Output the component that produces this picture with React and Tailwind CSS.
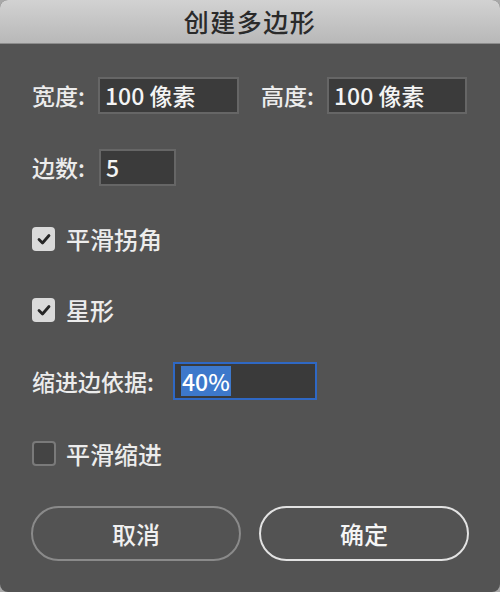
import React from "react";

const font = { fontFamily: '"Noto Sans CJK SC", "Noto Sans", sans-serif' };

function Check({ checked }) {
  return checked ? (
    <div className="w-[23px] h-[24px] rounded-[4px] bg-[#dadada] flex items-center justify-center">
      <svg width="14" height="12" viewBox="0 0 14 12">
        <path d="M2 6.5 L5.5 10 L12 2.5" fill="none" stroke="#262626" strokeWidth="2.8" strokeLinecap="round" strokeLinejoin="round" />
      </svg>
    </div>
  ) : (
    <div className="w-[24px] h-[25px] rounded-[4px] bg-[#444444] border-2 border-[#7a7a7a]" />
  );
}

function Field({ w, children }) {
  return (
    <div className={`${w} h-[37px] bg-[#3b3b3b] border-2 border-[#666666] flex items-center pl-[5px] text-[23px] font-medium text-[#f4f4f4]`}>
      {children}
    </div>
  );
}

export default function App() {
  return (
    <div className="w-[500px] h-[592px] bg-[#a8a8a8]" style={font}>
      <div className="w-[500px] h-[592px] bg-[#535353] rounded-[8px] overflow-hidden flex flex-col">
        <div className="h-[44px] shrink-0 bg-gradient-to-b from-[#d2d2d2] to-[#b8b8b8] border-b border-[#8c8c8c] flex items-center justify-center">
          <span className="text-[25px] text-[#2a2a2a] font-medium tracking-[1.5px]">创建多边形</span>
        </div>
        <div className="flex flex-col pl-[32px] text-[23px] font-medium text-[#ececec]">
          <div className="mt-[33px] h-[37px] flex items-center">
            <span className="w-[66px]">宽度:</span>
            <Field w="w-[141px]">100 像素</Field>
            <span className="ml-[22px] w-[66px]">高度:</span>
            <Field w="w-[140px]">100 像素</Field>
          </div>
          <div className="mt-[35px] h-[37px] flex items-center">
            <span className="w-[67px]">边数:</span>
            <Field w="w-[77px]">5</Field>
          </div>
          <div className="mt-[41px] h-[24px] flex items-center gap-[11px]">
            <Check checked />
            <span className="text-[24px]">平滑拐角</span>
          </div>
          <div className="mt-[46px] h-[25px] flex items-center gap-[11px]">
            <Check checked />
            <span className="text-[24px]">星形</span>
          </div>
          <div className="mt-[40px] h-[38px] flex items-center">
            <span className="w-[141px]">缩进边依据:</span>
            <div className="w-[144px] h-[38px] bg-[#3a3a3a] border-2 border-[#2f68c4] flex items-center pl-[6px] py-[2px]">
              <span className="h-full flex items-center bg-[#3d78cb] text-[23px] text-white px-[1px]">40%</span>
            </div>
          </div>
          <div className="mt-[41px] h-[25px] flex items-center gap-[10px]">
            <Check checked={false} />
            <span className="text-[24px]">平滑缩进</span>
          </div>
          <div className="mt-[40px] flex items-center gap-[18px]">
            <button className="w-[210px] h-[55px] rounded-full border-2 border-[#8a8a8a] flex items-center justify-center text-[24px] text-[#f0f0f0] font-medium -ml-[1px]">
              取消
            </button>
            <button className="w-[210px] h-[55px] rounded-full border-2 border-[#e2e2e2] flex items-center justify-center text-[24px] text-[#f5f5f5] font-medium">
              确定
            </button>
          </div>
        </div>
      </div>
    </div>
  );
}
